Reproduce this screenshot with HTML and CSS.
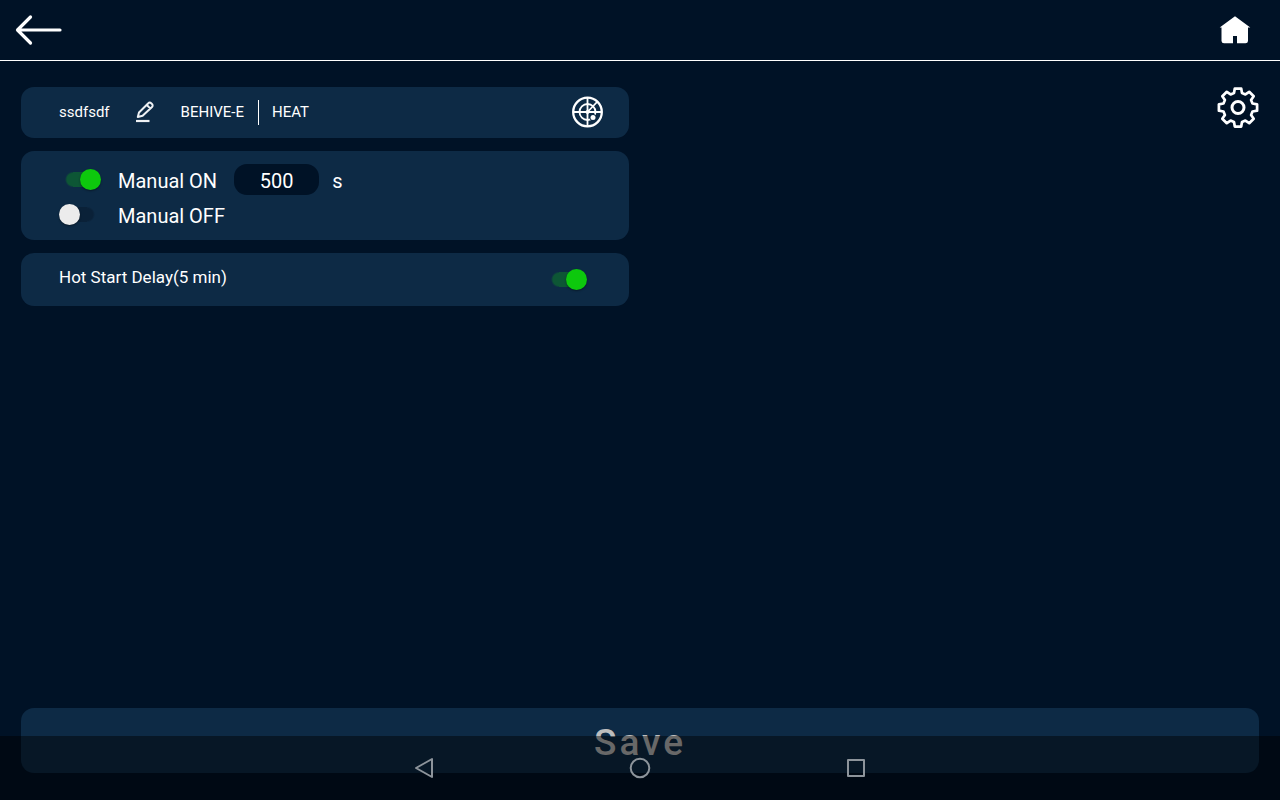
FILE: index.html
```html
<!DOCTYPE html>
<html lang="en">
<head>
<meta charset="utf-8">
<meta name="viewport" content="width=device-width, initial-scale=1">
<title>BEHIVE-E Heat</title>
<link rel="stylesheet" href="styles.css">
</head>
<body>
<div class="app">
  <header class="topbar">
    <button class="icon-btn" type="button" aria-label="Back">
      <svg width="48" height="32" viewBox="0 0 48 32" fill="none" stroke="#fff" stroke-width="3.200" stroke-linecap="round" stroke-linejoin="round"><path d="M15.500 3 2.500 16l13 13M3 16h42"/></svg>
    </button>
    <button class="icon-btn" type="button" aria-label="Home">
      <svg width="32" height="28" viewBox="0 0 32 28" fill="#fff"><path d="M16 0.200 31.300 11.500H29V25a2.500 2.500 0 0 1-2.500 2.300H18V20h-4v7.300H5A2.500 2.500 0 0 1 2.500 25V11.500H0.700Z"/></svg>
    </button>
  </header>

  <main class="content">
    <div class="cards">
      <section class="card device">
        <span class="device-name">ssdfsdf</span>
        <button class="icon-btn edit" type="button" aria-label="Edit name">
          <svg width="20" height="22" viewBox="0 0 20 22" fill="none" stroke="#eef1f4" stroke-linejoin="round"><path stroke-width="2" d="M2.800 16 4 11.500 13.300 2.200a2 2 0 0 1 2.900 0l.8.8a2 2 0 0 1 0 2.900L7.600 14.800 2.800 16ZM11.800 4l3.400 3.400"/><path stroke-width="2.200" d="M1 20h13.500"/></svg>
        </button>
        <span class="device-model">BEHIVE-E</span>
        <span class="device-mode">HEAT</span>
        <button class="icon-btn radar" type="button" aria-label="Locate device">
          <svg width="32" height="32" viewBox="0 0 32 32" fill="none" stroke="#fff" stroke-width="1.800"><circle cx="15.500" cy="16" r="14.300" stroke-width="2.300"/><circle cx="15.500" cy="16" r="8"/><path d="M15.500 1.500v29M1 16h29M15.500 16l10-10.500"/><circle cx="21" cy="21.500" r="3.400" fill="#0d2a45" stroke="none"/><circle cx="21" cy="21.500" r="2.500" fill="#fff" stroke="none"/><circle cx="15.500" cy="16" r="2" fill="#fff" stroke="none"/></svg>
        </button>
      </section>

      <section class="card manual">
        <div class="row">
          <input class="switch" type="checkbox" id="manual-on" checked>
          <label class="row-label" for="manual-on">Manual ON</label>
          <input class="seconds" type="text" inputmode="numeric" value="500" aria-label="Manual ON seconds">
          <span class="unit">s</span>
        </div>
        <div class="row">
          <input class="switch" type="checkbox" id="manual-off">
          <label class="row-label" for="manual-off">Manual OFF</label>
        </div>
      </section>

      <section class="card delay">
        <label class="delay-label" for="hot-start">Hot Start Delay(5 min)</label>
        <input class="switch" type="checkbox" id="hot-start" checked>
      </section>
    </div>

    <button class="icon-btn settings" type="button" aria-label="Settings">
      <svg width="42" height="42" viewBox="-21 -20.500 42 42" fill="none" stroke="#fff" stroke-width="2.700" stroke-linejoin="round"><path d="M-3.200-18.900 3.200-18.900 4-14.500 7.400-13.100 11.200-15.700 15.700-11.200 13.100-7.400 14.500-4 19.100-3.200 19.100 3.200 14.500 4 13.100 7.400 15.700 11.200 11.200 15.700 7.400 13.100 4 14.500 3.200 19.100-3.200 19.100-4 14.500-7.400 13.100-11.200 15.700-15.700 11.200-13.100 7.400-14.500 4-19.100 3.200-19.100-3.200-14.500-4-13.100-7.400-15.700-11.200-11.200-15.700-7.400-13.100-4-14.500Z"/><circle r="6" stroke-width="3"/></svg>
    </button>
  </main>

  <footer class="actions">
    <button class="save" type="button">Save</button>
  </footer>
</div>

<nav class="system-nav" aria-label="System navigation">
  <button class="icon-btn" type="button" aria-label="System back">
    <svg width="24" height="24" viewBox="0 0 24 24" fill="none" stroke="#8d949b" stroke-width="2" stroke-linejoin="round"><path d="M20 3v18L4 12Z"/></svg>
  </button>
  <button class="icon-btn" type="button" aria-label="System home">
    <svg width="24" height="24" viewBox="0 0 24 24" fill="none" stroke="#8d949b" stroke-width="2"><circle cx="12" cy="12" r="9.300"/></svg>
  </button>
  <button class="icon-btn" type="button" aria-label="Recent apps">
    <svg width="24" height="24" viewBox="0 0 24 24" fill="none" stroke="#8d949b" stroke-width="2" stroke-linejoin="round"><path d="M4 4h16v16H4Z"/></svg>
  </button>
</nav>
</body>
</html>
```

FILE: styles.css
```css
* {
  box-sizing: border-box;
}

body {
  margin: 0;
  background: #001226;
  color: #fff;
  font-family: Roboto, "Liberation Sans", sans-serif;
}

button,
input {
  margin: 0;
  font-family: inherit;
  color: inherit;
}

.app {
  display: flex;
  flex-direction: column;
  min-height: 100vh;
}

.icon-btn {
  display: flex;
  padding: 0;
  border: 0;
  background: none;
  cursor: pointer;
}

.topbar {
  display: flex;
  align-items: center;
  justify-content: space-between;
  padding: 14px 29px 14px 15px;
  border-bottom: 1px solid #fff;
}

.content {
  flex: 1;
  display: grid;
  grid-template-columns: 1fr 1fr;
  gap: 22px;
  align-items: start;
  padding: 26px 21px;
}

.cards {
  display: flex;
  flex-direction: column;
  gap: 13px;
}

.card {
  border-radius: 13px;
  background: #0d2a45;
}

.device {
  display: flex;
  align-items: center;
  padding: 9px 25px 10px 38px;
  font-size: 15px;
  line-height: 25px;
}

.edit {
  margin: 0 26px 0 25px;
}

.device-mode {
  margin-left: 14px;
  padding-left: 13px;
  border-left: 1px solid #fff;
}

.radar {
  margin-left: auto;
}

.manual {
  display: flex;
  flex-direction: column;
  gap: 4px;
  padding: 13px 38px 10px;
}

.row {
  display: flex;
  align-items: center;
  min-height: 31px;
  font-size: 20px;
  line-height: 25px;
}

.row-label,
.unit {
  padding-top: 4px;
}

.row-label {
  margin-left: 17px;
}

.switch {
  appearance: none;
  flex: none;
  display: flex;
  align-items: center;
  width: 42px;
  height: 21px;
  background: linear-gradient(#0a2138, #0a2138) center / 14px 15px no-repeat,
    radial-gradient(circle at 14px 50%, #0a2138 6px, transparent 8px),
    radial-gradient(circle at 28px 50%, #0a2138 6px, transparent 8px);
  cursor: pointer;
}

.switch::before {
  content: "";
  width: 21px;
  height: 21px;
  border-radius: 50%;
  background: #ececec;
  box-shadow: 0 1px 2px rgba(0, 0, 0, 0.4);
}

.switch:checked {
  justify-content: flex-end;
  background: linear-gradient(#0d5635, #0d5635) center / 14px 15px no-repeat,
    radial-gradient(circle at 14px 50%, #0d5635 6px, transparent 8px);
}

.switch:checked::before {
  background: #0dc80d;
}

.seconds {
  width: 85px;
  height: 31px;
  margin: 0 13px 0 17px;
  padding: 2px 0 0;
  border: 0;
  border-radius: 13px;
  background: #001226;
  font-size: 20px;
  text-align: center;
}

.delay {
  display: flex;
  align-items: center;
  justify-content: space-between;
  padding: 14px 42px 14px 38px;
  font-size: 17px;
  line-height: 21px;
}

.delay-label {
  padding-bottom: 4px;
}

.settings {
  justify-self: end;
}

.actions {
  padding: 0 21px 27px;
}

.save {
  display: block;
  width: 100%;
  padding: 12px 10px 8px;
  border: 0;
  border-radius: 13px;
  background: #0d2a45;
  color: #bdbdbd;
  font-size: 37px;
  font-weight: 500;
  line-height: 45px;
  letter-spacing: 3px;
  cursor: pointer;
}

.system-nav {
  position: fixed;
  inset: auto 0 0;
  display: flex;
  align-items: center;
  justify-content: center;
  gap: 192px;
  height: 64px;
  background: rgba(0, 0, 0, 0.45);
}
```
